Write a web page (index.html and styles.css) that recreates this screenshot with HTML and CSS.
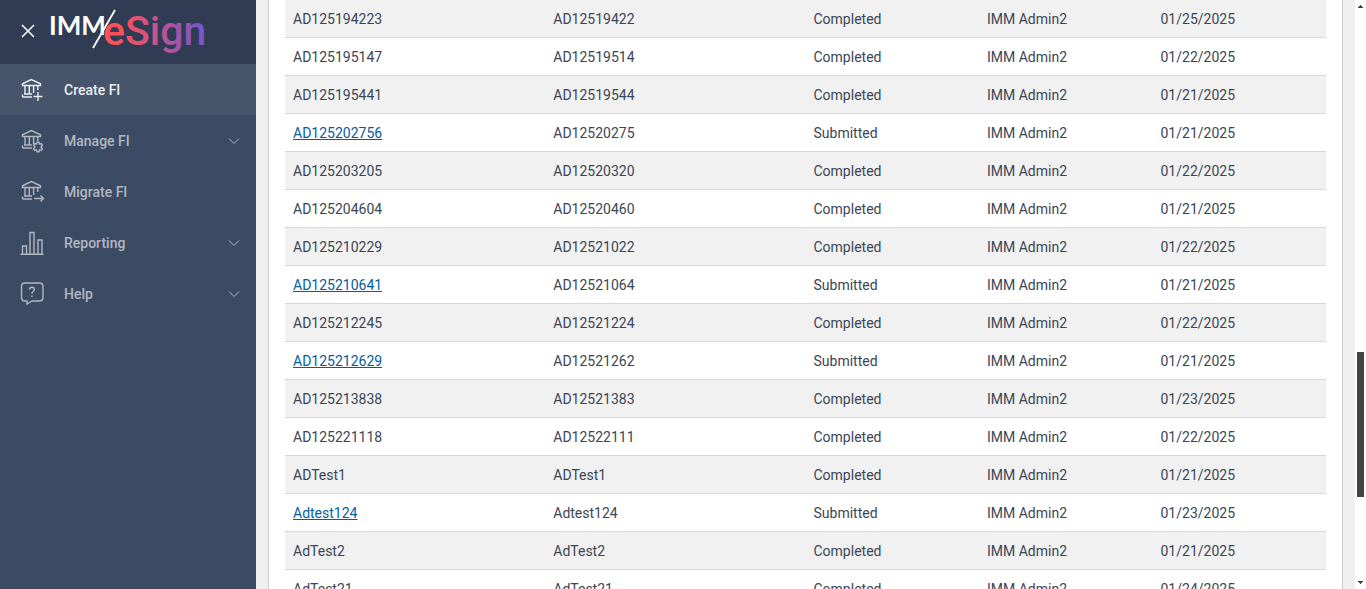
FILE: index.html
```html
<!DOCTYPE html>
<html lang="en">
<head>
<meta charset="utf-8">
<title>IMM eSign</title>
<link rel="stylesheet" href="styles.css">
</head>
<body>
<svg class="defs" aria-hidden="true">
  <symbol id="bank" viewBox="0 0 25 25">
    <path d="M2.5 8.500V6.800L11.3 2.6L20.5 6.800V8.500ZM5 9v8M9.3 9v8M13.6 9v7M17.8 9v4M4 17h8M2.5 20h9.500M2.5 20v-2.500"/>
  </symbol>
  <symbol id="chevron" viewBox="0 0 12 8"><path d="M1 1.500l5 5l5-5"/></symbol>
</svg>
<aside class="sidebar">
  <header class="brand">
    <button class="close" aria-label="Close menu">
      <svg width="14" height="14" viewBox="0 0 14 14"><path d="M1 1l12 12M13 1L1 13"/></svg>
    </button>
    <svg class="logo" width="164" height="58" viewBox="-4 0 164 58" role="img" aria-label="IMM eSign">
      <defs>
        <linearGradient id="fade" gradientUnits="userSpaceOnUse" x1="64" y1="0" x2="156" y2="0">
          <stop offset="0" stop-color="#ff5058"/>
          <stop offset="0.12" stop-color="#f8505f"/>
          <stop offset="0.6" stop-color="#ad54a0"/>
          <stop offset="1" stop-color="#7057d2"/>
        </linearGradient>
      </defs>
      <text class="logo-imm" x="-2" y="35">IMM</text>
      <path d="M42 48L64 10" stroke="#fff" stroke-width="1.800"/>
      <text class="logo-sign" x="52" y="45" fill="url(#fade)">eSign</text>
    </svg>
  </header>
  <nav class="menu">
    <a class="item active" href="#create">
      <svg class="icon"><use href="#bank"/><path d="M18 15v9M13.500 19.500h9"/></svg>
      <span>Create FI</span>
    </a>
    <a class="item" href="#manage">
      <svg class="icon"><use href="#bank"/><path d="M17 14.200h2l.5 1.900l1.900-.5l1 1.700l-1.400 1.700l1.400 1.700l-1 1.700l-1.900-.5l-.5 1.900h-2l-.5-1.900l-1.900.5l-1-1.700l1.400-1.700l-1.400-1.700l1-1.700l1.900.5z"/></svg>
      <span>Manage FI</span>
      <svg class="chevron"><use href="#chevron"/></svg>
    </a>
    <a class="item" href="#migrate">
      <svg class="icon"><use href="#bank"/><path d="M14 19.500h9.500M20.500 16.500l3 3l-3 3"/></svg>
      <span>Migrate FI</span>
    </a>
    <a class="item" href="#reporting">
      <svg class="icon"><path d="M.500 24.200h23M2.500 24v-8h4v8M10 24V2.500h4V24M18 24V10h4v14"/></svg>
      <span>Reporting</span>
      <svg class="chevron"><use href="#chevron"/></svg>
    </a>
    <a class="item" href="#help">
      <svg class="icon"><path d="M5 2h14.500q3.500 0 3.500 3.500v11q0 3.500-3.500 3.500H12l-5 3v-3H5q-3.500 0-3.500-3.500v-11Q1.500 2 5 2z"/><path d="M9.500 8.500q0-2.200 2.400-2.200t2.400 2.200q0 1.300-1.200 2q-1.200.800-1.200 2.300M11.900 14.500v1.500"/></svg>
      <span>Help</span>
      <svg class="chevron"><use href="#chevron"/></svg>
    </a>
  </nav>
</aside>
<main class="content">
  <section class="panel">
    <table class="records" aria-label="Financial institutions">
      <colgroup><col class="wide"><col class="wide"><col><col><col></colgroup>
      <tbody>
        <tr><td>AD125194223</td><td>AD12519422</td><td>Completed</td><td>IMM Admin2</td><td>01/25/2025</td></tr>
        <tr><td>AD125195147</td><td>AD12519514</td><td>Completed</td><td>IMM Admin2</td><td>01/22/2025</td></tr>
        <tr><td>AD125195441</td><td>AD12519544</td><td>Completed</td><td>IMM Admin2</td><td>01/21/2025</td></tr>
        <tr><td><a href="#AD125202756">AD125202756</a></td><td>AD12520275</td><td>Submitted</td><td>IMM Admin2</td><td>01/21/2025</td></tr>
        <tr><td>AD125203205</td><td>AD12520320</td><td>Completed</td><td>IMM Admin2</td><td>01/22/2025</td></tr>
        <tr><td>AD125204604</td><td>AD12520460</td><td>Completed</td><td>IMM Admin2</td><td>01/21/2025</td></tr>
        <tr><td>AD125210229</td><td>AD12521022</td><td>Completed</td><td>IMM Admin2</td><td>01/22/2025</td></tr>
        <tr><td><a href="#AD125210641">AD125210641</a></td><td>AD12521064</td><td>Submitted</td><td>IMM Admin2</td><td>01/21/2025</td></tr>
        <tr><td>AD125212245</td><td>AD12521224</td><td>Completed</td><td>IMM Admin2</td><td>01/22/2025</td></tr>
        <tr><td><a href="#AD125212629">AD125212629</a></td><td>AD12521262</td><td>Submitted</td><td>IMM Admin2</td><td>01/21/2025</td></tr>
        <tr><td>AD125213838</td><td>AD12521383</td><td>Completed</td><td>IMM Admin2</td><td>01/23/2025</td></tr>
        <tr><td>AD125221118</td><td>AD12522111</td><td>Completed</td><td>IMM Admin2</td><td>01/22/2025</td></tr>
        <tr><td>ADTest1</td><td>ADTest1</td><td>Completed</td><td>IMM Admin2</td><td>01/21/2025</td></tr>
        <tr><td><a href="#Adtest124">Adtest124</a></td><td>Adtest124</td><td>Submitted</td><td>IMM Admin2</td><td>01/23/2025</td></tr>
        <tr><td>AdTest2</td><td>AdTest2</td><td>Completed</td><td>IMM Admin2</td><td>01/21/2025</td></tr>
        <tr><td>AdTest21</td><td>AdTest21</td><td>Completed</td><td>IMM Admin2</td><td>01/24/2025</td></tr>
      </tbody>
    </table>
  </section>
</main>
<div class="scrollbar" aria-hidden="true">
  <svg width="5" height="3" viewBox="0 0 5 3"><path d="M0 3V2h1V1h1V0h1v1h1v1h1v1z"/></svg>
  <div class="track"><div class="thumb"></div></div>
  <svg width="5" height="3" viewBox="0 0 5 3"><path d="M0 0v1h1v1h1v1h1V2h1V1h1V0z"/></svg>
</div>
</body>
</html>
```
FILE: styles.css
```css
* { box-sizing: border-box; }

body {
  margin: 0;
  height: 100vh;
  display: flex;
  overflow: hidden;
  background: #f0f0f0;
  color: #3b4655;
  font: 14px/21px Roboto, "Liberation Sans", sans-serif;
}

.defs { position: absolute; width: 0; height: 0; }

.sidebar {
  flex: 0 0 256px;
  background: #3c4b64;
}

.brand {
  display: flex;
  align-items: flex-start;
  height: 64px;
  padding-left: 21px;
  background: #303c54;
}

.close {
  margin-top: 24px;
  padding: 0;
  border: 0;
  background: none;
  line-height: 0;
}
.close path { stroke: #fff; stroke-width: 1.5; }

.logo { margin-left: 12px; }
.logo-imm { font: 700 26px Lato, sans-serif; fill: #fff; }
.logo-sign { font: 500 41px Roboto, sans-serif; }

.item {
  display: flex;
  align-items: center;
  height: 51px;
  padding: 0 16px 0 20px;
  color: #b1b7c1;
  font-weight: 500;
  text-decoration: none;
}
.item.active { background: #46546c; color: #ebedef; }
.item span { padding-top: 2px; }
.item svg { fill: none; stroke: currentColor; }
.icon {
  width: 25px;
  height: 25px;
  margin-right: 19px;
  stroke-width: 1.4;
}
.chevron {
  width: 12px;
  height: 8px;
  margin-left: auto;
}

.content {
  flex: 1;
  min-width: 0;
  padding: 0 12px;
}
.panel {
  padding: 0 16px;
  border: solid #ccc;
  border-width: 0 1px;
  background: #fff;
}

.records {
  width: 100%;
  table-layout: fixed;
  border-collapse: separate;
  border-spacing: 0;
}
.records .wide { width: 25%; }
.records tr:nth-child(odd) { background: #f1f1f1; }
.records td {
  padding: 9px 8px 7px;
  border-bottom: 1px solid #d8d8d8;
}
.records a { color: #005ea2; }

.scrollbar {
  flex: 0 0 11px;
  display: flex;
  flex-direction: column;
  align-items: center;
  padding: 5px 0;
  background: #fff;
}
.scrollbar svg { fill: #404040; }
.track {
  flex: 1;
  display: flex;
  flex-direction: column;
}
.track::before { content: ""; flex: 344; }
.track::after { content: ""; flex: 84; }
.thumb {
  flex: 145;
  width: 7px;
  background: #444;
}
```
